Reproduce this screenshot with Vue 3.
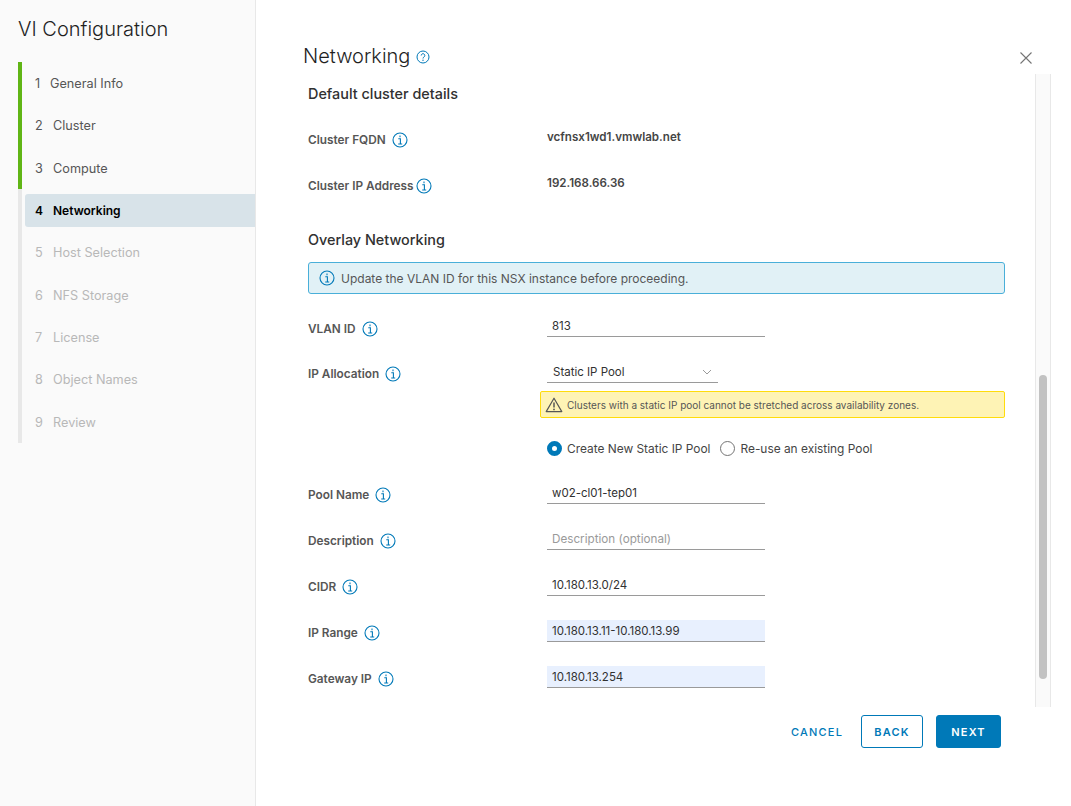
<script setup>
const steps = [
  { n: 1, label: 'General Info', state: 'done' },
  { n: 2, label: 'Cluster', state: 'done' },
  { n: 3, label: 'Compute', state: 'done' },
  { n: 4, label: 'Networking', state: 'active' },
  { n: 5, label: 'Host Selection', state: 'todo' },
  { n: 6, label: 'NFS Storage', state: 'todo' },
  { n: 7, label: 'License', state: 'todo' },
  { n: 8, label: 'Object Names', state: 'todo' },
  { n: 9, label: 'Review', state: 'todo' },
]
const fields = [
  { label: 'Pool Name', value: 'w02-cl01-tep01' },
  { label: 'Description', placeholder: 'Description (optional)' },
  { label: 'CIDR', value: '10.180.13.0/24' },
  { label: 'IP Range', value: '10.180.13.11-10.180.13.99', filled: true },
  { label: 'Gateway IP', value: '10.180.13.254', filled: true },
]
</script>

<template>
  <div class="page">
    <aside class="side">
      <h1 class="side-title">VI Configuration</h1>
      <ol class="steps">
        <li v-for="s in steps" :key="s.n" class="step" :class="s.state">
          <span class="pill"><span class="num">{{ s.n }}</span>{{ s.label }}</span>
        </li>
      </ol>
    </aside>
    <main class="main">
      <header class="head">
        <h2 class="title">Networking</h2>
        <svg class="help" width="14" height="14" viewBox="0 0 14 14">
          <circle cx="7" cy="7" r="6" fill="none" stroke="#0079b8" stroke-width="1" />
          <path d="M5.2 5.5a1.8 1.8 0 1 1 2.8 1.5c-.7.4-1 .8-1 1.5" fill="none" stroke="#0079b8" stroke-width="1" />
          <circle cx="7" cy="10.3" r=".7" fill="#0079b8" />
        </svg>
        <svg class="close" width="14" height="14" viewBox="0 0 14 14">
          <path d="M1.5 1.5l11 11M12.5 1.5l-11 11" stroke="#747474" stroke-width="1.1" fill="none" />
        </svg>
      </header>
      <div class="pane">
        <div class="form">
          <h3 class="section first">Default cluster details</h3>
          <div class="row cluster-first">
            <div class="label">Cluster FQDN
              <svg class="info" viewBox="0 0 16 16"><circle cx="8" cy="8" r="7" /><path d="M6.3 6.8H8.4V12M6.2 12H10.2M8 3.6V5.2" /></svg>
            </div>
            <div class="value">vcfnsx1wd1.vmwlab.net</div>
          </div>
          <div class="row">
            <div class="label">Cluster IP Address
              <svg class="info tight" viewBox="0 0 16 16"><circle cx="8" cy="8" r="7" /><path d="M6.3 6.8H8.4V12M6.2 12H10.2M8 3.6V5.2" /></svg>
            </div>
            <div class="value">192.168.66.36</div>
          </div>
          <h3 class="section second">Overlay Networking</h3>
          <div class="alert">
            <svg class="info alert-icon" viewBox="0 0 16 16"><circle cx="8" cy="8" r="7" /><path d="M6.3 6.8H8.4V12M6.2 12H10.2M8 3.6V5.2" /></svg>
            Update the VLAN ID for this NSX instance before proceeding.
          </div>
          <div class="row vlan">
            <div class="label">VLAN ID
              <svg class="info" viewBox="0 0 16 16"><circle cx="8" cy="8" r="7" /><path d="M6.3 6.8H8.4V12M6.2 12H10.2M8 3.6V5.2" /></svg>
            </div>
            <div class="input">813</div>
          </div>
          <div class="row alloc">
            <div class="label">IP Allocation
              <svg class="info" viewBox="0 0 16 16"><circle cx="8" cy="8" r="7" /><path d="M6.3 6.8H8.4V12M6.2 12H10.2M8 3.6V5.2" /></svg>
            </div>
            <div class="input select">Static IP Pool
              <svg class="chev" width="10" height="6" viewBox="0 0 10 6"><path d="M1 1l4 4 4-4" fill="none" stroke="#9a9a9a" stroke-width="1" /></svg>
            </div>
          </div>
          <div class="warn">
            <svg width="18" height="16" viewBox="0 0 18 16">
              <path d="M9 1.2L16.8 14.6H1.2Z" fill="none" stroke="#565656" stroke-width="1.2" stroke-linejoin="round" />
              <path d="M9 5.5V10.5" stroke="#565656" stroke-width="1.5" />
              <circle cx="9" cy="12.4" r=".9" fill="#565656" />
            </svg>
            Clusters with a static IP pool cannot be stretched across availability zones.
          </div>
          <div class="radios">
            <span class="radio checked"></span><span class="radio-text">Create New Static IP Pool</span>
            <span class="radio"></span><span class="radio-text">Re-use an existing Pool</span>
          </div>
          <div v-for="f in fields" :key="f.label" class="row">
            <div class="label">{{ f.label }}
              <svg class="info" viewBox="0 0 16 16"><circle cx="8" cy="8" r="7" /><path d="M6.3 6.8H8.4V12M6.2 12H10.2M8 3.6V5.2" /></svg>
            </div>
            <div class="input" :class="{ filled: f.filled, ph: f.placeholder }">{{ f.value || f.placeholder }}</div>
          </div>
        </div>
        <div class="track"><div class="thumb"></div></div>
      </div>
      <footer class="foot">
        <button class="btn link">CANCEL</button>
        <button class="btn outline">BACK</button>
        <button class="btn solid">NEXT</button>
      </footer>
    </main>
  </div>
</template>

<style>
html, body { margin: 0; background: #fff; }
</style>

<style scoped>
.page {
  display: flex;
  width: 1071px;
  height: 806px;
  overflow: hidden;
  font-family: Inter, "Liberation Sans", sans-serif;
  color: #565656;
  background: #fff;
}
.side {
  width: 255px;
  flex: none;
  background: #fafafa;
  border-right: 1px solid #e8e8e8;
}
.side-title {
  margin: 17px 0 0 18px;
  height: 24px;
  font-size: 20px;
  line-height: 24px;
  font-weight: 300;
  color: #1f1f1f;
}
.steps {
  list-style: none;
  margin: 21px 0 0 18px;
  padding: 0;
  width: 237px;
}
.step {
  height: 42.3px;
  border-left: 4px solid #e8e8e8;
  padding-left: 3px;
  display: flex;
  align-items: center;
  font-size: 12.7px;
  color: #565656;
}
.step.done { border-left-color: #60b515; }
.step.todo { color: #b8b8b8; }
.pill {
  display: flex;
  align-items: center;
  flex: 1;
  height: 33px;
  padding: 1px 0 0 10px;
  box-sizing: border-box;
  border-radius: 3px 0 0 3px;
}
.num { width: 18px; }
.step:first-child .num { width: 15px; }
.step.active .pill {
  background: #d8e3e9;
  color: #000;
  font-weight: 600;
  padding-top: 0;
}
.step.active { font-size: 12px; }
.main {
  flex: 1;
  display: flex;
  flex-direction: column;
  min-width: 0;
}
.head {
  height: 74px;
  display: flex;
  align-items: center;
  padding: 38px 38px 0 47px;
  box-sizing: border-box;
  flex: none;
}
.title {
  margin: 0;
  font-size: 20px;
  line-height: 24px;
  font-weight: 300;
  color: #1f1f1f;
}
.help { margin: 2px 0 0 6px; }
.close { margin: 4px 0 0 auto; }
.pane {
  height: 633px;
  flex: none;
  display: flex;
  padding-left: 52px;
  box-sizing: border-box;
  overflow: hidden;
}
.form {
  width: 697px;
  flex: none;
}
.section {
  margin: 0;
  height: 20px;
  line-height: 20px;
  font-size: 14.4px;
  font-weight: 500;
  color: #313131;
}
.section.first { margin-top: 10px; }
.section.second { margin-top: 21px; }
.row {
  display: grid;
  grid-template-columns: 239px 218px;
  height: 46px;
  align-items: center;
}
.cluster-first { margin-top: 13px; }
.label {
  display: flex;
  align-items: center;
  font-size: 11.8px;
  font-weight: 600;
  color: #565656;
}
.info {
  width: 16px;
  height: 16px;
  margin-left: 6px;
  flex: none;
  fill: none;
  stroke: #0079b8;
  stroke-width: 1.1;
}
.info.tight { margin-left: 2px; }
.value {
  font-size: 11.6px;
  font-weight: 600;
  color: #454545;
  margin-bottom: 6px;
}
.alert {
  display: flex;
  align-items: center;
  height: 32px;
  box-sizing: border-box;
  margin-top: 12px;
  padding-left: 10px;
  background: #e1f1f6;
  border: 1px solid #49afd9;
  border-radius: 3px;
  font-size: 12px;
  color: #565656;
}
.alert-icon {
  margin: 0 6px 0 0;
}
.vlan { margin-top: 12px; }
.alloc { height: 39px; align-items: center; }
.alloc .label { margin-top: 4px; }
.input {
  box-sizing: border-box;
  height: 22px;
  line-height: 23px;
  padding-left: 5px;
  border-bottom: 1px solid #9a9a9a;
  font-size: 11.5px;
  color: #313131;
  margin-bottom: 4px;
}
.vlan .input { margin-bottom: 6px; }
.input.filled { background: #e8f0fe; }
.input.ph { color: #9a9a9a; font-size: 11.7px; }
.select {
  width: 171px;
  display: flex;
  align-items: center;
  justify-content: space-between;
  padding: 2px 6px 0 6px;
  margin-bottom: 0;
}
.warn {
  display: flex;
  align-items: center;
  gap: 4px;
  height: 27px;
  box-sizing: border-box;
  margin: 0 0 0 232px;
  padding-left: 4px;
  background: #fef3b5;
  border: 1px solid #ffdc0b;
  border-radius: 2px;
  font-size: 10px;
  color: #565656;
}
.radios {
  display: flex;
  align-items: center;
  height: 54px;
  box-sizing: border-box;
  padding: 7px 0 0 239px;
  font-size: 11.9px;
  color: #454545;
}
.radio {
  width: 15px;
  height: 15px;
  box-sizing: border-box;
  border: 1px solid #747474;
  border-radius: 50%;
  background: #fff;
  margin-right: 5px;
}
.radio.checked {
  border: 5px solid #0079b8;
}
.radio-text { margin-right: 10px; }
.track {
  width: 16px;
  height: 633px;
  margin-left: 30px;
  box-sizing: border-box;
  background: #fafafa;
  border-left: 1px solid #e8e8e8;
  border-right: 1px solid #e8e8e8;
  padding: 301px 3px 0;
  flex: none;
}
.thumb {
  height: 304px;
  background: #c2c2c2;
  border-radius: 4px;
}
.foot {
  display: flex;
  justify-content: flex-end;
  align-items: center;
  gap: 13px;
  margin-top: 8px;
  padding-right: 70px;
}
.btn {
  font-family: inherit;
  height: 33px;
  box-sizing: border-box;
  font-size: 11px;
  font-weight: 600;
  letter-spacing: 1.2px;
  border-radius: 3px;
  color: #0079b8;
  background: #fff;
  border: 1px solid #0079b8;
  padding: 0;
}
.btn.link { border: none; width: 52px; background: none; font-weight: 500; margin-right: 5px; }
.btn.solid { background: #0079b8; color: #fff; width: 65px; }
.btn.outline { width: 62px; }
</style>
